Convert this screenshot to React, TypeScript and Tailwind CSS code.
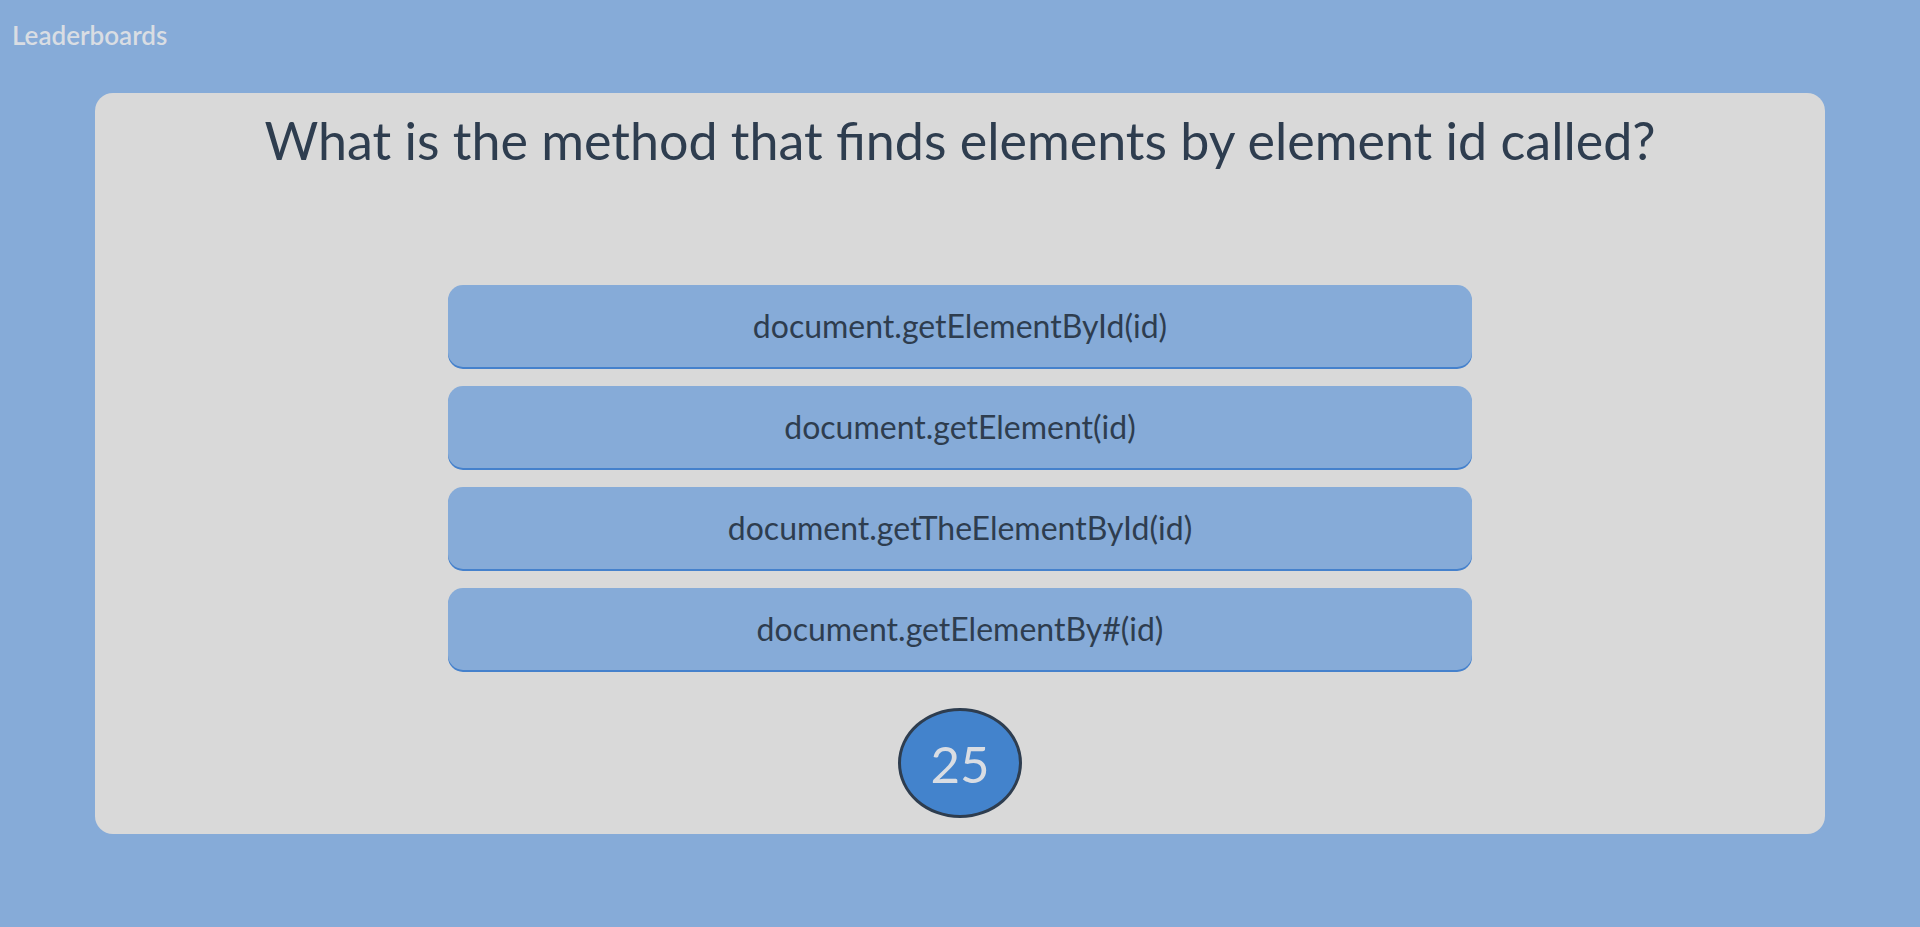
const answers = [
  "document.getElementById(id)",
  "document.getElement(id)",
  "document.getTheElementById(id)",
  "document.getElementBy#(id)",
];

export default function App() {
  return (
    <div className="min-h-screen w-full bg-[#86abd8] pb-[93px] font-['Lato','Noto_Sans',sans-serif]">
      {/* nav */}
      <div className="h-[93px] pl-[12px] pt-[20px]">
        <span className="block text-[26px] leading-[30px] font-semibold text-[#d9dde3]">Leaderboards</span>
      </div>

      {/* quiz card */}
      <div className="mx-auto flex w-[1730px] flex-col items-center rounded-[18px] bg-[#d9d9d9] pt-[16px] pb-[16px]">
        <h1 className="text-[52px] leading-[62px] text-[#2e3d4f]">
          What is the method that finds elements by element id called?
        </h1>

        <div className="mt-[114px] flex flex-col gap-[19px]">
          {answers.map((a, i) => (
            <button
              key={i}
              className="flex h-[82px] w-[1024px] items-center justify-center rounded-[15px] bg-[#86abd8] text-[32px] text-[#2e3d4f] shadow-[0_2px_0_#4581cc]"
            >
              {a}
            </button>
          ))}
        </div>

        {/* timer */}
        <div className="mt-[38px] flex h-[110px] w-[124px] items-center justify-center rounded-[50%] border-[3px] border-[#2e3d4f] bg-[#4383cc]">
          <span className="text-[51px] leading-none text-[#d9dde3]">25</span>
        </div>
      </div>
    </div>
  );
}
